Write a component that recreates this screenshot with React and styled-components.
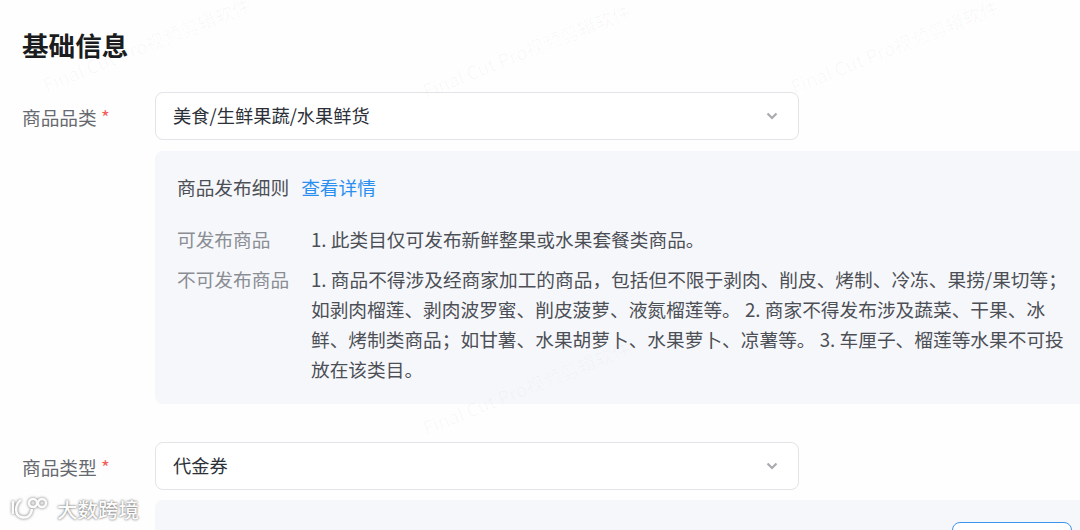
import React from "react";
import styled, { createGlobalStyle } from "styled-components";

const rules = [
  {
    label: "可发布商品",
    lines: ["1. 此类目仅可发布新鲜整果或水果套餐类商品。"],
  },
  {
    label: "不可发布商品",
    lines: [
      "1. 商品不得涉及经商家加工的商品，包括但不限于剥肉、削皮、烤制、冷冻、果捞/果切等；",
      "如剥肉榴莲、剥肉波罗蜜、削皮菠萝、液氮榴莲等。 2. 商家不得发布涉及蔬菜、干果、冰",
      "鲜、烤制类商品；如甘薯、水果胡萝卜、水果萝卜、凉薯等。 3. 车厘子、榴莲等水果不可投",
      "放在该类目。",
    ],
  },
];

// start of each rotated watermark, left end of the baseline
const marks = [
  { x: 47, y: 94 },
  { x: 427, y: 100 },
  { x: 795, y: 96 },
  { x: 427, y: 437 },
];

function Chevron() {
  return (
    <ChevronIcon viewBox="0 0 12 8" aria-hidden="true">
      <path d="M1.5 1.5 6 6l4.5-4.5" />
    </ChevronIcon>
  );
}

function App() {
  return (
    <Page>
      <GlobalStyle />
      <Title>基础信息</Title>

      <FormRow>
        <Label>
          商品品类 <Star>*</Star>
        </Label>
        <Select>
          美食/生鲜果蔬/水果鲜货
          <Chevron />
        </Select>
      </FormRow>

      <RulesPanel>
        <RulesHead>
          商品发布细则<DetailLink>查看详情</DetailLink>
        </RulesHead>
        {rules.map((rule) => (
          <RuleRow key={rule.label}>
            <RuleLabel>{rule.label}</RuleLabel>
            <RuleText>
              {rule.lines.map((line) => (
                <RuleLine key={line}>{line}</RuleLine>
              ))}
            </RuleText>
          </RuleRow>
        ))}
      </RulesPanel>

      <SecondRow>
        <Label>
          商品类型 <Star>*</Star>
        </Label>
        <Select>
          代金券
          <Chevron />
        </Select>
      </SecondRow>

      <BottomPanel>
        <OutlineButton />
      </BottomPanel>

      {marks.map((m) => (
        <WatermarkText key={m.x + "-" + m.y} style={{ left: m.x, top: m.y - 20 }}>
          Final Cut Pro视频剪辑软件
        </WatermarkText>
      ))}

      <Brand>
        <BrandLogo viewBox="0 0 42 28" aria-hidden="true">
          <path d="M5 6v13M13 5C7 9 6 20 13 22c7 2 10-2 11-8" />
          <circle cx="25" cy="8" r="4" />
          <circle cx="34" cy="8" r="4" />
        </BrandLogo>
        大数跨境
      </Brand>
    </Page>
  );
}

export default App;

const GlobalStyle = createGlobalStyle`
  html, body {
    margin: 0;
    padding: 0;
    background: #fff;
    overflow: hidden;
  }
`;

const Page = styled.div`
  position: relative;
  width: 1080px;
  height: 530px;
  overflow: hidden;
  padding: 28px 0 0 22px;
  box-sizing: border-box;
  background: #fffefe;
  font-family: "Noto Sans CJK SC", "Inter", sans-serif;
  color: #1f2329;
`;

const Title = styled.h1`
  margin: 0 0 30px;
  font-size: 26.6px;
  line-height: 34px;
  font-weight: 700;
  color: #1a1c20;
`;

const FormRow = styled.div`
  display: flex;
  align-items: center;
`;

const SecondRow = styled(FormRow)`
  margin-top: 38px;
`;

const Label = styled.div`
  width: 133px;
  flex: none;
  padding-top: 1px;
  font-size: 18.7px;
  color: #666a70;
`;

const Star = styled.span`
  color: #f0605c;
`;

const Select = styled.div`
  width: 644px;
  height: 48px;
  box-sizing: border-box;
  display: flex;
  align-items: center;
  justify-content: space-between;
  padding: 0 20px 2px 17px;
  border: 1px solid #e3e4e7;
  border-radius: 8px;
  background: #fff;
  font-size: 18.25px;
  color: #2c3038;
`;

const ChevronIcon = styled.svg`
  width: 12px;
  height: 8px;
  margin-top: 2px;
  fill: none;
  stroke: #a9abaf;
  stroke-width: 2.2;
`;

const RulesPanel = styled.div`
  margin: 11px 0 0 133px;
  width: 960px;
  height: 253px;
  box-sizing: border-box;
  padding: 23px 0 0 22px;
  background: #f6f7fb;
  border-radius: 8px;
`;

const RulesHead = styled.div`
  display: flex;
  gap: 12px;
  font-size: 18.7px;
  line-height: 26px;
  color: #4c4f55;
  margin-bottom: 24px;
`;

const DetailLink = styled.a`
  color: #2b8ff0;
`;

const RuleRow = styled.div`
  display: flex;
  margin-bottom: 10px;
  font-size: 18.7px;
  line-height: 30px;
`;

const RuleLabel = styled.div`
  width: 134px;
  flex: none;
  color: #8a8d93;
`;

const RuleText = styled.div`
  color: #4c4f55;
`;

const RuleLine = styled.div`
  white-space: nowrap;
`;

const BottomPanel = styled.div`
  margin: 10px 0 0 133px;
  width: 960px;
  height: 60px;
  box-sizing: border-box;
  padding: 22px 0 0 797px;
  background: #f6f7fb;
  border-radius: 8px 8px 0 0;
`;

const OutlineButton = styled.div`
  width: 120px;
  height: 40px;
  box-sizing: border-box;
  border: 1px solid #3b95ee;
  border-radius: 8px;
  background: #fff;
`;

const WatermarkText = styled.div`
  position: absolute;
  font-size: 18.5px;
  line-height: 20px;
  white-space: nowrap;
  color: rgba(60, 60, 60, 0.03);
  transform: rotate(-21.5deg);
  transform-origin: left bottom;
  pointer-events: none;
`;

const Brand = styled.div`
  position: absolute;
  left: 8px;
  bottom: 7px;
  display: flex;
  align-items: center;
  gap: 7px;
  font-size: 20.5px;
  line-height: 28px;
  font-weight: 500;
  color: #fbfbfb;
  text-shadow: 0 0 2px rgba(0, 0, 0, 0.5), 0 0 3px rgba(0, 0, 0, 0.3);
`;

const BrandLogo = styled.svg`
  width: 42px;
  height: 28px;
  fill: none;
  stroke: #fbfbfb;
  stroke-width: 2.5;
  filter: drop-shadow(0 0 1.5px rgba(0, 0, 0, 0.55));
`;
